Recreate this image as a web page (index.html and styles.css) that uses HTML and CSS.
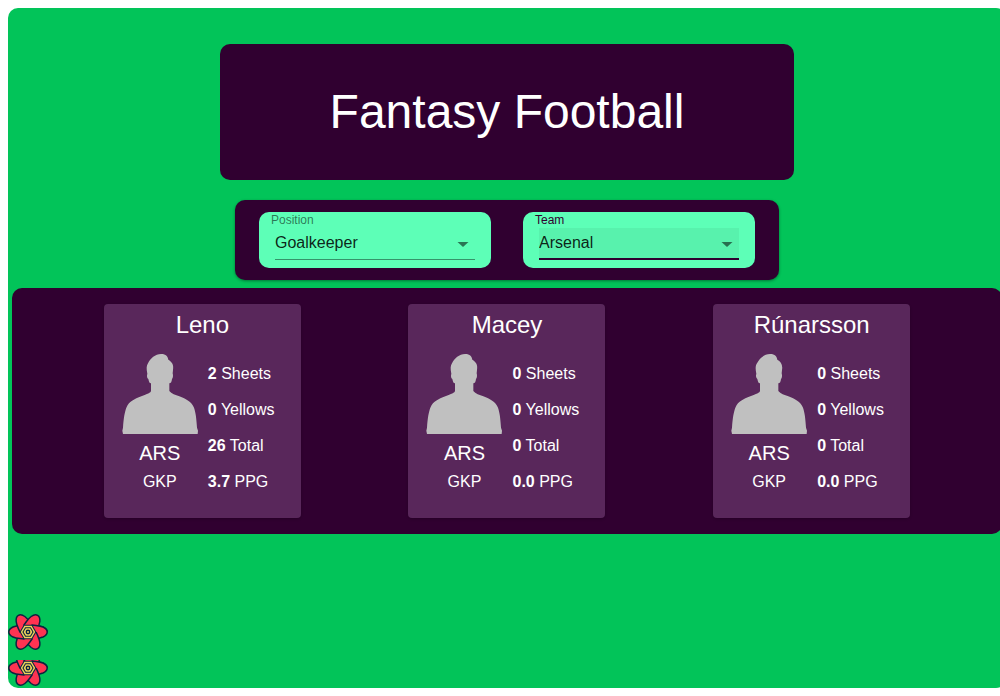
FILE: index.html
```
<!DOCTYPE html>
<html lang="en">
<head>
<meta charset="utf-8">
<title>Fantasy Football</title>
<link rel="stylesheet" href="styles.css">
</head>
<body>
<svg class="defs" width="0" height="0" aria-hidden="true">
  <clipPath id="upper"><rect x="-20" y="-20" width="40" height="20"/></clipPath>
  <symbol id="person" viewBox="75 177 240 240">
    <path d="M84 417 L82 407 L84 398 C86 370 89 350 95 336 C101 321 118 312 139 304 C156 297 168 293 168 288 V265 C163 265 162 260 160 252 C156 249 155 243 157 236 C154 222 154 212 159 205 C166 190 181 177 198 177 C210 177 218 182 220 194 C230 200 237 208 234 225 L233 235 C235 242 234 249 231 252 C230 260 228 265 223 265 V288 C229 296 242 300 253 304 C273 312 290 321 296 336 C302 350 304 370 306 398 L309 407 L308 417 Z"/>
  </symbol>
  <symbol id="arrow" viewBox="0 0 24 24"><path d="M6.5 10l5.5 5 5.5-5z"/></symbol>
  <symbol id="flower" viewBox="-20 -20 40 40">
    <g fill="#ff3352" stroke="#0b2440" stroke-width="1.5" stroke-linejoin="round">
      <path id="petal" d="M4 -7 L8 -6.6 C10.5 -6.3 13 -5.9 15 -5 C17.6 -3.8 19.2 -2.2 19.2 0 C19.2 2.2 17.6 3.8 15 5 C12 6.2 8 7 4 7 Z"/>
      <use href="#petal" transform="rotate(60)"/>
      <use href="#petal" transform="rotate(120)"/>
      <use href="#petal" transform="rotate(180)"/>
      <use href="#petal" transform="rotate(240)"/>
      <use href="#petal" transform="rotate(300)"/>
      <g clip-path="url(#upper)"><use href="#petal"/></g>
    </g>
    <path fill="#0b2440" d="M-8.4 0 L-4.2 -7.3 H4.2 L8.4 0 L4.2 7.3 H-4.2 Z"/>
    <path fill="#efd35a" d="M-7.2 0 L-3.6 -6.2 H3.6 L7.2 0 L3.6 6.2 H-3.6 Z"/>
    <path fill="#0b2440" d="M-5.6 0 L-2.8 -4.8 H2.8 L5.6 0 L2.8 4.8 H-2.8 Z"/>
    <path fill="#efd35a" d="M-4.4 0 L-2.2 -3.8 H2.2 L4.4 0 L2.2 3.8 H-2.2 Z"/>
    <circle fill="#0b2440" r="2.4"/>
    <circle fill="#efd35a" r="1"/>
  </symbol>
</svg>
<div class="app">
  <header class="banner"><h1 class="banner-title">Fantasy Football</h1></header>

  <form class="filters">
    <div class="field">
      <label class="field-label" for="position">Position</label>
      <div class="field-control">
        <select class="field-select" id="position"><option>Goalkeeper</option></select>
        <svg class="field-arrow" aria-hidden="true"><use href="#arrow"/></svg>
      </div>
    </div>
    <div class="field field-active">
      <label class="field-label" for="team">Team</label>
      <div class="field-control">
        <select class="field-select" id="team"><option>Arsenal</option></select>
        <svg class="field-arrow" aria-hidden="true"><use href="#arrow"/></svg>
      </div>
    </div>
  </form>

  <main class="players">
    <article class="card">
      <h2 class="card-name">Leno</h2>
      <div class="card-body">
        <div class="profile">
          <svg class="photo" aria-hidden="true"><use href="#person"/></svg>
          <p class="team">ARS</p>
          <p class="role">GKP</p>
        </div>
        <ul class="stats">
          <li><b>2</b> Sheets</li>
          <li><b>0</b> Yellows</li>
          <li><b>26</b> Total</li>
          <li><b>3.7</b> PPG</li>
        </ul>
      </div>
    </article>
    <article class="card">
      <h2 class="card-name">Macey</h2>
      <div class="card-body">
        <div class="profile">
          <svg class="photo" aria-hidden="true"><use href="#person"/></svg>
          <p class="team">ARS</p>
          <p class="role">GKP</p>
        </div>
        <ul class="stats">
          <li><b>0</b> Sheets</li>
          <li><b>0</b> Yellows</li>
          <li><b>0</b> Total</li>
          <li><b>0.0</b> PPG</li>
        </ul>
      </div>
    </article>
    <article class="card">
      <h2 class="card-name">Rúnarsson</h2>
      <div class="card-body">
        <div class="profile">
          <svg class="photo" aria-hidden="true"><use href="#person"/></svg>
          <p class="team">ARS</p>
          <p class="role">GKP</p>
        </div>
        <ul class="stats">
          <li><b>0</b> Sheets</li>
          <li><b>0</b> Yellows</li>
          <li><b>0</b> Total</li>
          <li><b>0.0</b> PPG</li>
        </ul>
      </div>
    </article>
  </main>

  <footer class="devtools">
    <button class="devtools-button" type="button" aria-label="Open query devtools"><svg class="flower"><use href="#flower"/></svg></button>
    <button class="devtools-button devtools-button-short" type="button" aria-label="Open second query devtools"><svg class="flower"><use href="#flower"/></svg></button>
  </footer>
</div>
</body>
</html>
```
FILE: styles.css
```
* {
  box-sizing: border-box;
}

html {
  overflow-x: hidden;
}

body {
  margin: 8px 0 8px 8px;
  background: #fff;
  font-family: "Liberation Sans", Arial, sans-serif;
  font-size: 16px;
  line-height: 24px;
}

h1, h2, p, ul {
  margin: 0;
  padding: 0;
  font-weight: 400;
}

.defs {
  position: absolute;
}

.app {
  display: flex;
  flex-direction: column;
  align-items: center;
  min-height: calc(100vh - 16px);
  margin-right: -6px;
  padding: 36px 4px 0;
  border-radius: 10px;
  background: #02c459;
}

.banner {
  width: 58%;
  padding: 40px 16px;
  border-radius: 10px;
  background: #300030;
  color: #fff;
  text-align: center;
}

.banner-title {
  font-size: 48px;
  line-height: 56px;
}

.filters {
  display: flex;
  gap: 32px;
  margin: 20px 0 8px;
  padding: 12px 24px;
  border-radius: 10px;
  background: #300030;
  box-shadow: 0 1px 3px rgba(0, 0, 0, 0.4);
}

.field {
  padding: 0 12px 8px;
  border-radius: 10px;
  background: #5dffb7;
}

.field-label {
  display: block;
  font-size: 12px;
  line-height: 16px;
  color: rgba(0, 0, 0, 0.54);
}

.field-control {
  position: relative;
  width: 200px;
  margin: 0 4px;
}

.field-select {
  display: block;
  width: 100%;
  height: 32px;
  padding: 0 24px 2px 0;
  border: 0;
  border-bottom: 1px solid rgba(0, 0, 0, 0.42);
  border-radius: 0;
  outline: 0;
  appearance: none;
  background: transparent;
  color: rgba(0, 0, 0, 0.87);
  font: inherit;
}

.field-active .field-label {
  color: #300030;
}

.field-active .field-select {
  padding-bottom: 1px;
  border-bottom: 2px solid #300030;
  background: rgba(0, 0, 0, 0.05);
}

.field-arrow {
  position: absolute;
  top: 4px;
  right: 0;
  width: 24px;
  height: 24px;
  fill: rgba(0, 0, 0, 0.54);
  pointer-events: none;
}

.players {
  display: grid;
  grid-template-columns: repeat(3, 1fr);
  justify-items: center;
  align-self: stretch;
  padding: 16px 38px;
  border-radius: 10px;
  background: #300030;
}

.card {
  width: 197px;
  padding: 4px 16px 24px;
  border-radius: 4px;
  background: #59275b;
  box-shadow: 0 1px 3px rgba(0, 0, 0, 0.2);
  color: #fff;
}

.card-name {
  font-size: 24px;
  line-height: 34px;
  text-align: center;
}

.card-body {
  display: flex;
  gap: 8px;
  margin-top: 12px;
}

.profile {
  width: 80px;
  text-align: center;
}

.photo {
  display: block;
  width: 80px;
  height: 80px;
  fill: #c0c0c0;
}

.team {
  margin: 4px 0 2px;
  font-size: 20px;
  line-height: 30px;
}

.stats {
  display: flex;
  flex-direction: column;
  gap: 12px;
  padding-top: 8px;
  list-style: none;
  white-space: nowrap;
}

.devtools {
  display: flex;
  flex-direction: column;
  gap: 8px;
  align-self: stretch;
  margin: auto -4px 0;
}

.devtools-button {
  display: flex;
  align-items: flex-end;
  width: 40px;
  height: 40px;
  padding: 0;
  overflow: hidden;
  border: 0;
  background: transparent;
}

.devtools-button-short {
  height: 28px;
}

.flower {
  flex: none;
  width: 40px;
  height: 40px;
}
```
